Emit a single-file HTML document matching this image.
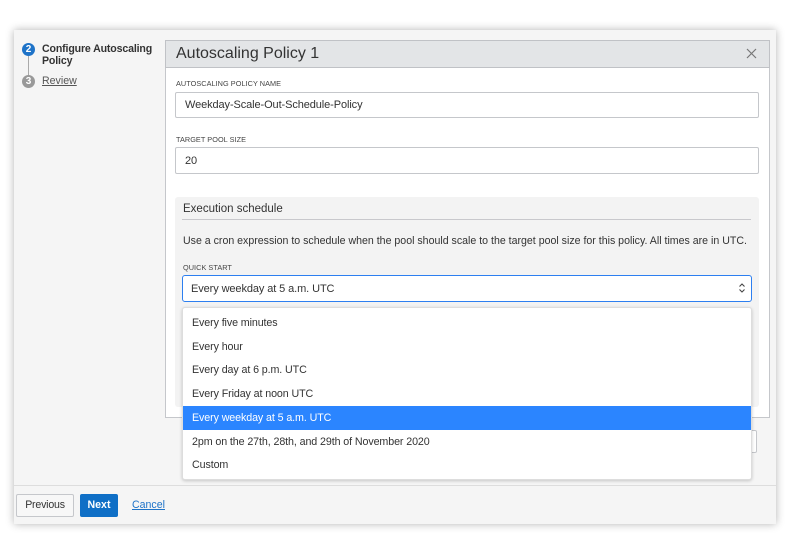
<!DOCTYPE html>
<html><head><style>
*{box-sizing:border-box;margin:0;padding:0}
body{width:786px;height:544px;background:#fff;font-family:"Liberation Sans",sans-serif;position:relative;overflow:hidden;color:#333}
.win{position:absolute;left:14px;top:30px;width:762px;height:494px;background:#f5f5f5;box-shadow:0 0 8px rgba(0,0,0,.3)}
.a{position:absolute}
.inp{position:absolute;background:#fff;border:1px solid #c5c7cb;border-radius:2px;font-size:11px;letter-spacing:-.1px;padding-left:9px;display:flex;align-items:center;color:#333}
.lbl{position:absolute;font-size:7.3px;color:#444;letter-spacing:.05px}
.opt{position:absolute;left:0;width:100%;height:24px;font-size:10.7px;letter-spacing:-.1px;padding-left:9px;display:flex;align-items:center;color:#333}
</style></head><body>
<div class="win"></div>
<div class="a" style="left:22px;top:43px;width:13px;height:13px;border-radius:50%;background:#1e73c8;color:#fff;font-size:10px;font-weight:bold;text-align:center;line-height:13px">2</div>
<div class="a" style="left:28px;top:56px;width:1px;height:20px;background:#aaa"></div>
<div class="a" style="left:22px;top:75px;width:13px;height:13px;border-radius:50%;background:#999;color:#fff;font-size:10px;font-weight:bold;text-align:center;line-height:13px">3</div>
<div class="a" style="left:42px;top:43px;font-size:10.6px;letter-spacing:-.15px;font-weight:bold;color:#333;line-height:12px">Configure Autoscaling<br>Policy</div>
<div class="a" style="left:42px;top:75px;font-size:10.6px;color:#555;text-decoration:underline">Review</div>
<div class="a" style="left:165px;top:40px;width:605px;height:378px;background:#fff;border:1px solid #c5c7cb"></div>
<div class="a" style="left:165px;top:40px;width:605px;height:28px;background:#e3e5e7;border:1px solid #c0c2c6"></div>
<div class="a" style="left:176px;top:45px;font-size:16px;letter-spacing:0;color:#333">Autoscaling Policy 1</div>
<svg class="a" style="left:746px;top:48px" width="11" height="11" viewBox="0 0 11 11"><path d="M1 1L10 10M10 1L1 10" stroke="#777" stroke-width="1.2"/></svg>
<div class="lbl" style="left:176px;top:79px">AUTOSCALING POLICY NAME</div>
<div class="inp" style="left:175px;top:92px;width:584px;height:26px">Weekday-Scale-Out-Schedule-Policy</div>
<div class="lbl" style="left:176px;top:135px">TARGET POOL SIZE</div>
<div class="inp" style="left:175px;top:147px;width:584px;height:27px">20</div>
<div class="a" style="left:175px;top:197px;width:584px;height:210px;background:#f3f3f3;border-radius:3px"></div>
<div class="a" style="left:183px;top:203px;font-size:11.5px;letter-spacing:0;color:#333">Execution schedule</div>
<div class="a" style="left:182px;top:219px;width:569px;height:1px;background:#c8c8cc"></div>
<div class="a" style="left:183px;top:235px;font-size:10.6px;letter-spacing:0;color:#333;white-space:nowrap">Use a cron expression to schedule when the pool should scale to the target pool size for this policy. All times are in UTC.</div>
<div class="lbl" style="left:183px;top:263px">QUICK START</div>
<div class="inp" style="left:182px;top:275px;width:570px;height:27px;border:1px solid #2d7ff0;border-radius:3px;padding-left:8px">Every weekday at 5 a.m. UTC</div>
<svg class="a" style="left:738px;top:282px" width="8" height="12" viewBox="0 0 8 12"><path d="M1.5 4.5L4 2L6.5 4.5M1.5 7.5L4 10L6.5 7.5" stroke="#444" stroke-width="1.1" fill="none"/></svg>
<div class="a" style="left:600px;top:430px;width:157px;height:23px;border:1px solid #c5c7cb;border-left:none;background:#fff;border-radius:2px"></div>
<div class="a" style="left:182px;top:307px;width:570px;height:173px;background:#fff;border:1px solid #ddd;border-radius:3px;box-shadow:0 1px 3px rgba(0,0,0,.2)">
<div class="opt" style="top:3px">Every five minutes</div>
<div class="opt" style="top:27px">Every hour</div>
<div class="opt" style="top:50px">Every day at 6 p.m. UTC</div>
<div class="opt" style="top:74px">Every Friday at noon UTC</div>
<div class="opt" style="top:98px;background:#2b85ff;color:#fff">Every weekday at 5 a.m. UTC</div>
<div class="opt" style="top:122px">2pm on the 27th, 28th, and 29th of November 2020</div>
<div class="opt" style="top:145px">Custom</div>
</div>
<div class="a" style="left:14px;top:485px;width:762px;height:1px;background:#ddd"></div>
<div class="a" style="left:16px;top:494px;width:58px;height:23px;border:1px solid #c5c7cb;border-radius:2px;background:#f7f7f7;font-size:10.6px;letter-spacing:-.2px;text-align:center;line-height:21px;color:#333">Previous</div>
<div class="a" style="left:80px;top:494px;width:38px;height:23px;border-radius:2px;background:#0f6fc6;font-size:10.6px;font-weight:bold;text-align:center;line-height:23px;color:#fff">Next</div>
<div class="a" style="left:132px;top:499px;font-size:10.6px;color:#1e73c8;text-decoration:underline">Cancel</div>
</body></html>
